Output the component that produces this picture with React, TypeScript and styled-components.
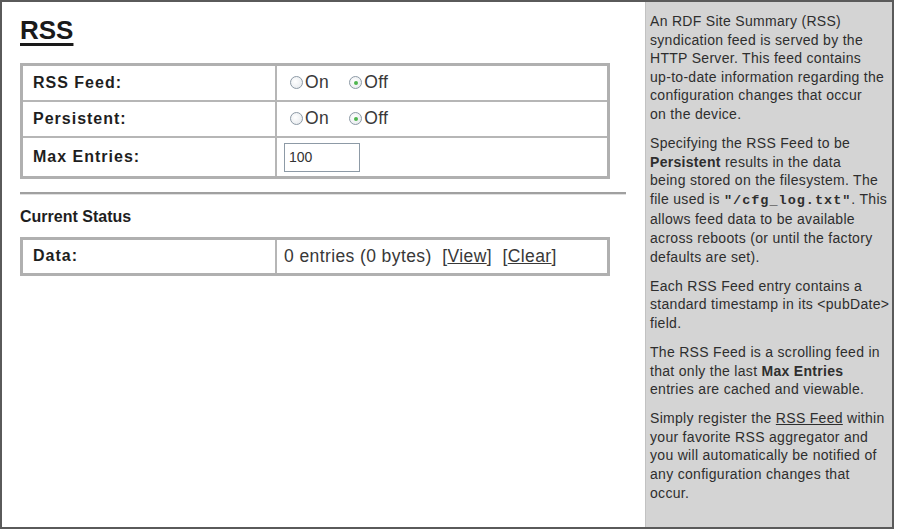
import styled, { createGlobalStyle } from "styled-components";

const GlobalStyle = createGlobalStyle`
  html, body {
    margin: 0;
    padding: 0;
    background: #ffffff;
  }
  body {
    font-family: "Liberation Sans", Arial, sans-serif;
    color: #222;
  }
`;

const Frame = styled.div`
  display: flex;
  width: 890px;
  height: 525px;
  border: 2px solid #5a5a5a;
  background: #ffffff;
`;

const Main = styled.div`
  flex: 1;
  display: flex;
  flex-direction: column;
  padding: 13px 18px 0 18px;
`;

const Title = styled.h1`
  margin: 0 0 18px 0;
  font-size: 26px;
  font-weight: bold;
  color: #1a1a1a;
  text-decoration: underline;
  text-decoration-thickness: 3px;
  text-underline-offset: 4px;
  line-height: 30px;
`;

const Table = styled.table`
  width: 590px;
  border-collapse: collapse;
  border: 3px solid #b0b0b0;
`;

const Row = styled.tr`
  height: 36px;
`;

const Label = styled.td`
  width: 232px;
  padding: 0 10px;
  border: 2px solid #b6b6b6;
  font-size: 16px;
  font-weight: bold;
  letter-spacing: 1px;
  color: #1e1e1e;
`;

const Value = styled.td`
  padding: 0 7px;
  border: 2px solid #b6b6b6;
  font-size: 17.5px;
  letter-spacing: 0.4px;
  color: #383838;
  white-space: nowrap;
`;

const RadioGroup = styled.div`
  display: flex;
  align-items: center;
`;

const RadioLabel = styled.label`
  display: inline-flex;
  align-items: center;
  margin-right: 14px;
`;

const Radio = styled.input.attrs({ type: "radio" })`
  appearance: none;
  width: 13px;
  height: 13px;
  margin: 0 2px 0 6px;
  border-radius: 50%;
  border: 1px solid #8d9aa6;
  background: radial-gradient(circle at 40% 40%, #ffffff 0%, #e2e6ea 100%);
  position: relative;

  &:checked::after {
    content: "";
    position: absolute;
    left: 3.5px;
    top: 3.5px;
    width: 4px;
    height: 4px;
    border-radius: 50%;
    background: #4fb54f;
  }
`;

const TextInput = styled.input`
  box-sizing: border-box;
  width: 76px;
  height: 29px;
  margin: 5px 0 4px 0;
  padding: 2px 4px;
  border: 1px solid #8d9aa6;
  font-family: "Liberation Sans", Arial, sans-serif;
  font-size: 14px;
  color: #333;
`;

const Rule = styled.hr`
  width: 606px;
  margin: 13px 0 0 0;
  border: 0;
  border-top: 2px solid #a0a0a0;
  border-bottom: 1px solid #e0e0e0;
`;

const SubTitle = styled.h2`
  margin: 12px 0 10px 0;
  font-size: 16px;
  font-weight: bold;
  color: #1e1e1e;
  line-height: 20px;
`;

const LinkText = styled.span`
  text-decoration: underline;
`;

const Sidebar = styled.aside`
  width: 240px;
  padding: 10px 2px 0 4px;
  background: #d4d4d4;
  border-left: 1px solid #c2c2c2;
  font-size: 14px;
  letter-spacing: 0.3px;
  line-height: 18.6px;
  color: #2e2e2e;
  white-space: nowrap;
`;

const Para = styled.p`
  margin: 0 0 10.5px 0;
`;

const Mono = styled.span`
  font-family: "Liberation Mono", "Courier New", monospace;
  font-size: 13.5px;
  font-weight: bold;
  letter-spacing: 1px;
`;

const Under = styled.span`
  text-decoration: underline;
`;

export default function App() {
  return (
    <>
      <GlobalStyle />
      <Frame>
        <Main>
          <Title>RSS</Title>
          <Table>
            <tbody>
              <Row>
                <Label>RSS Feed:</Label>
                <Value>
                  <RadioGroup>
                    <RadioLabel>
                      <Radio name="feed" />
                      On
                    </RadioLabel>
                    <RadioLabel>
                      <Radio name="feed" defaultChecked />
                      Off
                    </RadioLabel>
                  </RadioGroup>
                </Value>
              </Row>
              <Row>
                <Label>Persistent:</Label>
                <Value>
                  <RadioGroup>
                    <RadioLabel>
                      <Radio name="persist" />
                      On
                    </RadioLabel>
                    <RadioLabel>
                      <Radio name="persist" defaultChecked />
                      Off
                    </RadioLabel>
                  </RadioGroup>
                </Value>
              </Row>
              <Row>
                <Label>Max Entries:</Label>
                <Value>
                  <TextInput defaultValue="100" />
                </Value>
              </Row>
            </tbody>
          </Table>
          <Rule />
          <SubTitle>Current Status</SubTitle>
          <Table>
            <tbody>
              <Row>
                <Label>Data:</Label>
                <Value>
                  0 entries (0 bytes)&nbsp;&nbsp;[<LinkText>View</LinkText>]&nbsp;&nbsp;[
                  <LinkText>Clear</LinkText>]
                </Value>
              </Row>
            </tbody>
          </Table>
        </Main>
        <Sidebar>
          <Para>
            An RDF Site Summary (RSS)
            <br />
            syndication feed is served by the
            <br />
            HTTP Server. This feed contains
            <br />
            up-to-date information regarding the
            <br />
            configuration changes that occur
            <br />
            on the device.
          </Para>
          <Para>
            Specifying the RSS Feed to be
            <br />
            <b>Persistent</b> results in the data
            <br />
            being stored on the filesystem. The
            <br />
            file used is <Mono>"/cfg_log.txt"</Mono>. This
            <br />
            allows feed data to be available
            <br />
            across reboots (or until the factory
            <br />
            defaults are set).
          </Para>
          <Para>
            Each RSS Feed entry contains a
            <br />
            standard timestamp in its &lt;pubDate&gt;
            <br />
            field.
          </Para>
          <Para>
            The RSS Feed is a scrolling feed in
            <br />
            that only the last <b>Max Entries</b>
            <br />
            entries are cached and viewable.
          </Para>
          <Para>
            Simply register the <Under>RSS Feed</Under> within
            <br />
            your favorite RSS aggregator and
            <br />
            you will automatically be notified of
            <br />
            any configuration changes that
            <br />
            occur.
          </Para>
        </Sidebar>
      </Frame>
    </>
  );
}
